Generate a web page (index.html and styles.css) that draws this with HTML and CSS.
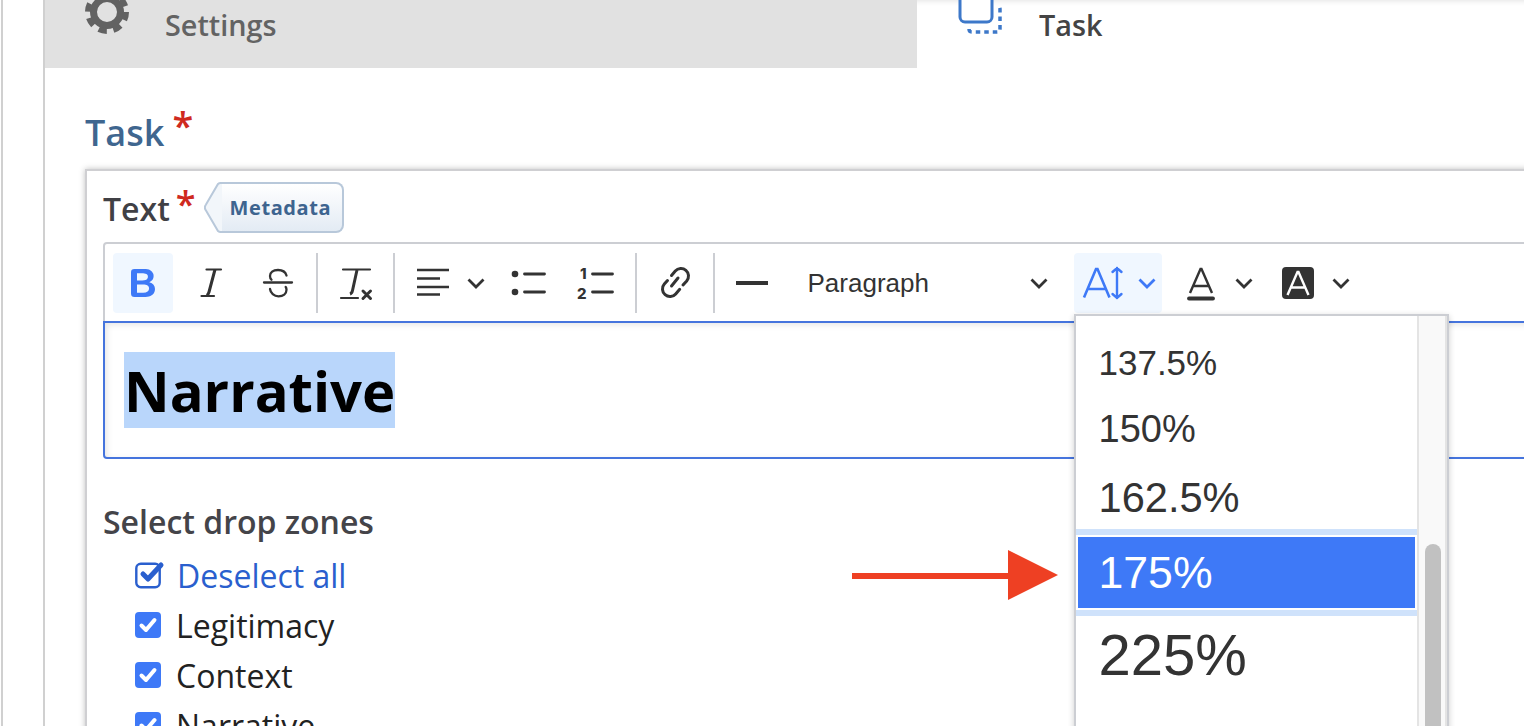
FILE: index.html
```
<!DOCTYPE html>
<html lang="en">
<head>
<meta charset="utf-8">
<title>Task editor</title>
<link rel="stylesheet" href="styles.css">
</head>
<body>
<div class="page">
  <div class="shell">
    <div class="tabs">
      <div class="tab tab-off">
        <svg class="tab-icon" width="48" height="48" viewBox="0 0 48 48"><circle cx="24" cy="24" r="13.500" fill="none" stroke="#626262" stroke-width="7"/><circle cx="24" cy="24" r="19" fill="none" stroke="#626262" stroke-width="6" stroke-dasharray="8.300 6.620"/></svg>
        <span>Settings</span>
      </div>
      <div class="tab tab-on">
        <svg class="tab-icon" width="48" height="48" viewBox="0 0 48 48"><rect x="4" y="-6" width="32" height="32" rx="5" fill="#fff" stroke="#3d78c9" stroke-width="3"/><path d="M13 33c0 2 1 3 3 3h25c2 0 3-1 3-3V13c0-2-1-3-3-3" fill="none" stroke="#3d78c9" stroke-width="3.500" stroke-dasharray="4.500 4"/></svg>
        <span>Task</span>
      </div>
    </div>
    <div class="content">
      <h2 class="heading">Task<span class="req">*</span></h2>
      <div class="card">
        <div class="field-head">
          <span class="field-label">Text<span class="req req-small">*</span></span>
          <span class="tag"><svg class="tag-tip" width="18" height="51" viewBox="0 0 18 51"><path fill="#f2f6fa" stroke="#b8c8da" stroke-width="2" d="M18 1h-1.500c-1 0-1.800.4-2.500 1L2 22.500c-1.500 2-1.500 4 0 6L14 49c.7.6 1.500 1 2.500 1H18"/></svg>Metadata</span>
        </div>
        <div class="editor">
          <div class="toolbar">
            <button class="btn on" type="button"><svg width="40" height="40" viewBox="0 0 20 20"><path fill="#3e79f7" d="M10.187 17H5.773c-.637 0-1.092-.138-1.364-.415-.273-.277-.409-.718-.409-1.323V4.738c0-.617.14-1.062.419-1.332.279-.27.73-.406 1.354-.406h4.68c.69 0 1.288.041 1.793.124.506.083.96.242 1.36.478.341.197.644.447.906.75a3.262 3.262 0 0 1 .808 2.162c0 1.401-.722 2.426-2.167 3.075C15.05 10.175 16 11.315 16 13.01a3.756 3.756 0 0 1-2.296 3.504 6.1 6.1 0 0 1-1.517.377c-.571.073-1.238.11-2 .11zm-.217-6.217H7v4.087h3.069c1.977 0 2.965-.69 2.965-2.072 0-.707-.256-1.22-.768-1.537-.512-.319-1.277-.478-2.296-.478zM7 5.130v3.619h2.606c.729 0 1.292-.067 1.690-.2a1.600 1.600 0 0 0 .91-.765c.165-.267.247-.566.247-.897 0-.707-.26-1.176-.778-1.409-.519-.232-1.310-.348-2.375-.348H7z"/></svg></button>
            <button class="btn" type="button"><svg width="40" height="40" viewBox="0 0 40 40"><path fill="none" stroke="#333" stroke-width="2.200" stroke-linecap="round" d="M15.500 6.500h14.500M10.500 33h12.500"/><path fill="none" stroke="#333" stroke-width="3" d="M24 6.500 18 29c-.5 2-1 3-2.500 3.500"/></svg></button>
            <button class="btn" type="button"><svg width="40" height="40" viewBox="0 0 40 40"><path fill="none" stroke="#333" stroke-width="2.300" stroke-linecap="round" d="M6 19.500h28M28.500 12.500c-1-3.500-4.500-5.500-8.500-5.500-5 0-8 2.500-8 6 0 1.500.5 2.800 1.500 3.800M12 26c.5 4 4 7.300 8.500 7.300 4.700 0 8-2.500 8-6.500 0-1-.2-2-.8-2.800"/></svg></button>
            <i class="sep"></i>
            <button class="btn" type="button"><svg width="40" height="40" viewBox="0 0 40 40"><path fill="none" stroke="#333" stroke-width="2.200" stroke-linecap="round" d="M6 6.500h27M4 35h17"/><path fill="none" stroke="#333" stroke-width="3" d="M20 7 15.500 27.500c-.4 2-1 3-2.500 3.500"/><path fill="none" stroke="#333" stroke-width="3" stroke-linecap="round" d="M26 28l7.500 7.500M33.500 28 26 35.500"/></svg></button>
            <i class="sep sep-b"></i>
            <button class="btn btn-drop btn-align" type="button"><svg width="40" height="40" viewBox="0 0 40 40"><path fill="none" stroke="#333" stroke-width="2.700" d="M4 7h32M4 15.500h23M4 24h32M4 31.500h23"/></svg><svg class="chev" width="18" height="11" viewBox="0 0 18 11"><path fill="none" stroke="#333" stroke-width="2.800" d="M1.500 1.500 9 9l7.500-7.500"/></svg></button>
            <button class="btn" type="button"><svg width="40" height="40" viewBox="0 0 40 40"><circle cx="6" cy="11" r="3.300" fill="#333"/><circle cx="6" cy="29" r="3.300" fill="#333"/><path fill="none" stroke="#333" stroke-width="2.800" stroke-linecap="round" d="M15.500 11h20M15.500 29h20"/></svg></button>
            <button class="btn" type="button"><svg width="40" height="40" viewBox="0 0 40 40"><text class="num" x="4" y="16" aria-hidden="true">1</text><text class="num" x="1" y="36" aria-hidden="true">2</text><path fill="none" stroke="#333" stroke-width="2.800" stroke-linecap="round" d="M16.500 11h20M16.500 29h20"/></svg></button>
            <i class="sep sep-d"></i>
            <button class="btn" type="button"><svg width="40" height="40" viewBox="0 0 40 40"><path fill="none" stroke="#333" stroke-width="3" stroke-linecap="round" d="M15.500 12.500l3.800-4.400A7.500 7.500 0 0 1 30.700 17.900L27 22M11.500 17.500l-3.200 3.600A7.500 7.500 0 0 0 19.700 30.900l4-4.600M15.500 23 22 15"/></svg></button>
            <i class="sep sep-c"></i>
            <button class="btn" type="button"><svg width="40" height="40" viewBox="0 0 40 40"><path fill="#333" d="M4 18h32v4H4z"/></svg></button>
            <button class="btn btn-para" type="button"><span>Paragraph</span><svg class="chev" width="18" height="11" viewBox="0 0 18 11"><path fill="none" stroke="#333" stroke-width="2.800" d="M1.500 1.500 9 9l7.500-7.500"/></svg></button>
            <div class="size-wrap">
              <button class="btn btn-size on" type="button"><svg width="50" height="34" viewBox="0 0 50 34"><path fill="none" stroke="#3e79f7" stroke-width="2.600" d="M2 31.500 14 3h1.500l12 28.500M6.500 23h17"/><path fill="none" stroke="#3e79f7" stroke-width="2.400" stroke-linecap="round" d="M35 2v30M30.500 6 35 2l4.500 4M30.500 28l4.500 4 4.500-4"/></svg><svg class="chev" width="18" height="11" viewBox="0 0 18 11"><path fill="none" stroke="#3e79f7" stroke-width="2.800" d="M1.500 1.500 9 9l7.500-7.500"/></svg></button>
              <div class="menu">
                <ul class="menu-list">
                  <li class="opt s1">137.5%</li>
                  <li class="opt s2">150%</li>
                  <li class="opt s3">162.5%</li>
                  <li class="opt s4 sel">175%</li>
                  <li class="opt s5">225%</li>
                </ul>
                <div class="track"><div class="thumb"></div></div>
              </div>
            </div>
            <button class="btn btn-drop btn-color" type="button"><svg width="40" height="40" viewBox="0 0 40 40"><path fill="none" stroke="#333" stroke-width="2.400" d="M9 30 19.500 6h1L31 30M12.500 23h15"/><path fill="none" stroke="#333" stroke-width="3.800" stroke-linecap="round" d="M8 35.500h24"/></svg><svg class="chev" width="18" height="11" viewBox="0 0 18 11"><path fill="none" stroke="#333" stroke-width="2.800" d="M1.500 1.500 9 9l7.500-7.500"/></svg></button>
            <button class="btn btn-drop" type="button"><svg width="40" height="40" viewBox="0 0 40 40"><rect x="4" y="4" width="32" height="32" rx="4" fill="#333"/><path fill="none" stroke="#fff" stroke-width="2.400" d="M9.500 32 19.500 9h1L30.500 32M13 24.500h14"/></svg><svg class="chev" width="18" height="11" viewBox="0 0 18 11"><path fill="none" stroke="#333" stroke-width="2.800" d="M1.500 1.500 9 9l7.500-7.500"/></svg></button>
          </div>
          <div class="editable"><span class="picked">Narrative</span></div>
        </div>
        <div class="zones">
          <div class="zones-title">Select drop zones</div>
          <ul class="zone-list">
            <li class="zone zone-all"><svg width="30" height="28" viewBox="0 0 30 28"><rect x="1.300" y="2.800" width="23.400" height="23.400" rx="4.500" fill="none" stroke="#2a5fce" stroke-width="2.400"/><path fill="none" stroke="#2a5fce" stroke-width="5" stroke-linecap="round" stroke-linejoin="round" d="M8 13l5 5L26 4"/></svg><span>Deselect all</span></li>
            <li class="zone"><svg width="26" height="26" viewBox="0 0 26 26"><rect width="26" height="26" rx="4" fill="#3e79f7"/><path fill="none" stroke="#fff" stroke-width="4" stroke-linecap="round" stroke-linejoin="round" d="M6.500 13.500l4.500 4.500 8.500-10"/></svg><span>Legitimacy</span></li>
            <li class="zone"><svg width="26" height="26" viewBox="0 0 26 26"><rect width="26" height="26" rx="4" fill="#3e79f7"/><path fill="none" stroke="#fff" stroke-width="4" stroke-linecap="round" stroke-linejoin="round" d="M6.500 13.500l4.500 4.500 8.500-10"/></svg><span>Context</span></li>
            <li class="zone"><svg width="26" height="26" viewBox="0 0 26 26"><rect width="26" height="26" rx="4" fill="#3e79f7"/><path fill="none" stroke="#fff" stroke-width="4" stroke-linecap="round" stroke-linejoin="round" d="M6.500 13.500l4.500 4.500 8.500-10"/></svg><span>Narrative</span></li>
          </ul>
        </div>
      </div>
    </div>
  </div>
  <svg class="callout" width="208" height="52" viewBox="0 0 208 52"><path fill="#ee4023" d="M0 23h156V0l50 25-50 25V29H0z"/></svg>
</div>
</body>
</html>
```
FILE: styles.css
```
* { box-sizing: border-box; }
html, body { margin: 0; height: 100%; overflow: hidden; background: #fff; }
body { font-family: "Open Sans", "Noto Sans", sans-serif; }
.page { position: relative; width: 1524px; height: 726px; overflow: hidden; padding-left: 43px; }
.page::before { content: ""; position: absolute; left: 1px; top: 0; bottom: 0; width: 2px; background: #d0d0d0; }
.shell { width: 1700px; height: 900px; border-left: 2px solid #d0d0d0; }
.tabs { display: flex; height: 68px; box-shadow: inset 0 6px 6px -6px rgba(0,0,0,.15); }
.tab { display: flex; align-items: flex-start; padding-left: 40px; font-size: 28.800px; font-weight: 600; line-height: 50px; }
.tab-off { width: 872px; background: #e1e1e1; color: #636363; }
.tab-on { width: 300px; color: #444; }
.tab-off .tab-icon { margin: -12px 34px 0 -2px; }
.tab-on .tab-icon { margin: -4px 35px 0 -1px; }
.content { padding: 37px 0 0 40px; }
.heading { margin: 0; height: 64px; font-size: 36px; font-weight: 600; line-height: 56px; color: #3f668f; }
.req { position: relative; top: -6px; margin-left: 8px; color: #cf2a1f; font-size: 38px; font-weight: 600; line-height: 0; }
.req-small { top: -4px; margin-left: 6px; font-size: 36px; }
.card { height: 700px; padding: 12px 0 0 16px; border: 2px solid #cfcfd2; border-right: 0; background: #fff; box-shadow: 0 0 6px rgba(0,0,0,.25); }
.field-head { display: flex; align-items: center; height: 52px; margin-bottom: 7px; }
.field-label { font-size: 32px; font-weight: 600; color: #404045; line-height: 52px; }
.tag { position: relative; width: 124px; height: 51px; margin: -4px 0 0 24px; padding-left: 10px; border: 2px solid #b8c8da; border-left: 0; border-radius: 0 8px 8px 0; background: linear-gradient(#fff, #e3ebf4); color: #3d648f; font-size: 20px; font-weight: 700; line-height: 47px; letter-spacing: .6px; }
.tag-tip { position: absolute; left: -16px; top: -2px; }
.editor { width: 1600px; }
.toolbar { display: flex; align-items: flex-start; height: 79px; padding: 9px 0 0 8px; border: 2px solid #ccced3; border-bottom: 0; border-radius: 4px 0 0 0; }
.btn { flex: none; display: flex; align-items: center; justify-content: center; width: 60px; height: 60px; margin: 0 7.500px 0 0; padding: 0; border: 0; border-radius: 4px; background: transparent; }
.btn.on { background: #f0f7ff; }
.sep { flex: none; width: 2px; height: 60px; margin-right: 9px; background: #ccced3; }
.sep-b { margin: 0 7px 0 -1px; }
.sep-c { margin: 0 7px 0 0; }
.sep-d { margin-left: 1px; }
.btn-drop { width: 92px; gap: 14px; justify-content: flex-start; padding-left: 10px; }
.btn-align { width: 89px; padding-left: 11px; }
.btn-color { width: 90px; }
.btn-para { width: 272px; justify-content: space-between; padding: 0 14px 0 18px; margin-right: 12px; font-family: "Liberation Sans", Arial, sans-serif; font-size: 26px; color: #333; }
.chev { flex: none; }
.num { font-family: "Inter", "Liberation Sans", sans-serif; font-size: 15px; font-weight: 800; fill: #333; }
.size-wrap { position: relative; flex: none; width: 88px; height: 60px; margin-right: 9px; }
.btn-size { width: 88px; justify-content: flex-start; padding-left: 8px; }
.btn-size svg:first-child { margin-right: 6px; }
.menu { position: absolute; left: 0; top: 61px; z-index: 2; display: flex; width: 375px; height: 430px; border: 2px solid #ccced3; border-radius: 0 0 4px 4px; background: #fff; box-shadow: 0 2px 6px rgba(0,0,0,.2); }
.menu-list { flex: none; width: 341px; margin: 0; padding: 14px 0 0; list-style: none; font-family: "Liberation Sans", Arial, sans-serif; color: #333; }
.opt { padding-left: 23px; }
.s1 { height: 66px; font-size: 35px; line-height: 66px; }
.s2 { height: 66px; font-size: 38px; line-height: 66px; }
.s3 { height: 72px; font-size: 41.600px; line-height: 72px; }
.s4 { height: 75px; font-size: 44.600px; line-height: 71px; }
.s5 { height: 90px; font-size: 58px; line-height: 90px; }
.sel { margin-top: 1px; padding-left: 21px; border: 2px solid #fff; background: #3e79f7; color: #fff; box-shadow: 0 -6px 0 #cfe2fb, 0 6px 0 #cfe2fb; }
.track { position: relative; flex: 1; border-left: 2px solid #e4e4e4; border-right: 2px solid #e4e4e4; background: #f9f9f9; }
.thumb { position: absolute; left: 6px; top: 228px; width: 16px; height: 300px; border-radius: 8px; background: #c1c1c1; }
.editable { height: 138px; padding: 29px 0 0 19px; border: 2px solid #4574dd; border-radius: 0 0 0 4px; box-shadow: inset 2px 2px 6px rgba(0,0,0,.1); }
.picked { display: inline-block; height: 76px; background: #b9d6fb; color: #000; font-size: 56.200px; font-weight: 700; line-height: 76px; }
.zones { padding-top: 43px; }
.zones-title { height: 40px; color: #444449; font-size: 32px; font-weight: 600; line-height: 40px; }
.zone-list { margin: 8px 0 0; padding: 0 0 0 32px; list-style: none; }
.zone { display: flex; align-items: center; gap: 15px; height: 50px; color: #222; font-size: 32px; }
.zone-all { gap: 12px; color: #2a5fce; }
.callout { position: absolute; left: 852px; top: 550px; }
```
